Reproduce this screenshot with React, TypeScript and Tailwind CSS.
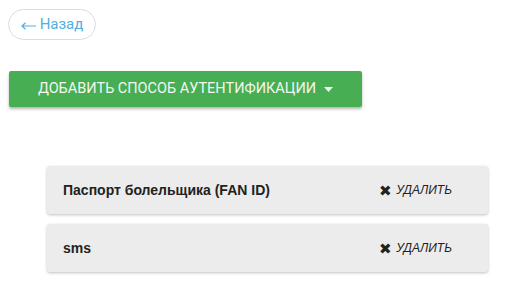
interface AuthMethod {
  id: string;
  title: string;
}

const methods: AuthMethod[] = [
  { id: 'fanid', title: 'Паспорт болельщика (FAN ID)' },
  { id: 'sms', title: 'sms' },
];

function MethodRow({ title }: { title: string }) {
  return (
    <div className="flex h-[48px] items-center justify-between rounded-[3px] bg-[#ececec] pl-[16px] pr-[36px] shadow-[0_1px_3px_rgba(0,0,0,0.25)]">
      <span className="font-['Liberation_Sans',Arial,sans-serif] text-[14px] font-bold text-[#222]">
        {title}
      </span>
      <button className="flex items-center gap-[4px] font-['Liberation_Sans',Arial,sans-serif] text-[12px] italic text-[#222]">
        <span className="text-[15px] not-italic leading-none">✖</span>
        <span>УДАЛИТЬ</span>
      </button>
    </div>
  );
}

export default function App() {
  return (
    <div className="min-h-screen bg-white pl-[8px] pt-[9px] font-['Roboto',sans-serif]">
      <button className="flex h-[31px] w-[88px] items-center justify-center gap-[4px] rounded-full border border-[#dcdcdc] text-[15px] text-[#4fb0e0]">
        <svg width="15" height="8" viewBox="0 0 15 8" className="mt-[3px]">
          <path d="M15 4H1M4.5 0.8L1 4l3.5 3.2" fill="none" stroke="#4fb0e0" strokeWidth="1.2" />
        </svg>
        <span>Назад</span>
      </button>

      <button className="mt-[31px] ml-px flex h-[36px] w-[353px] items-center justify-center gap-[6px] rounded-[2px] bg-[#48ae53] text-[14.5px] uppercase text-[#f2f7f2] shadow-[0_2px_3px_rgba(0,0,0,0.3)]">
        Добавить способ аутентификации
        <svg width="9" height="5" viewBox="0 0 9 5" className="ml-[2px]">
          <path d="M0 0h9L4.5 5z" fill="#f2f7f2" />
        </svg>
      </button>

      <div className="mt-[59px] ml-[39px] flex w-[441px] flex-col gap-[10px]">
        {methods.map((m) => (
          <MethodRow key={m.id} title={m.title} />
        ))}
      </div>
    </div>
  );
}
